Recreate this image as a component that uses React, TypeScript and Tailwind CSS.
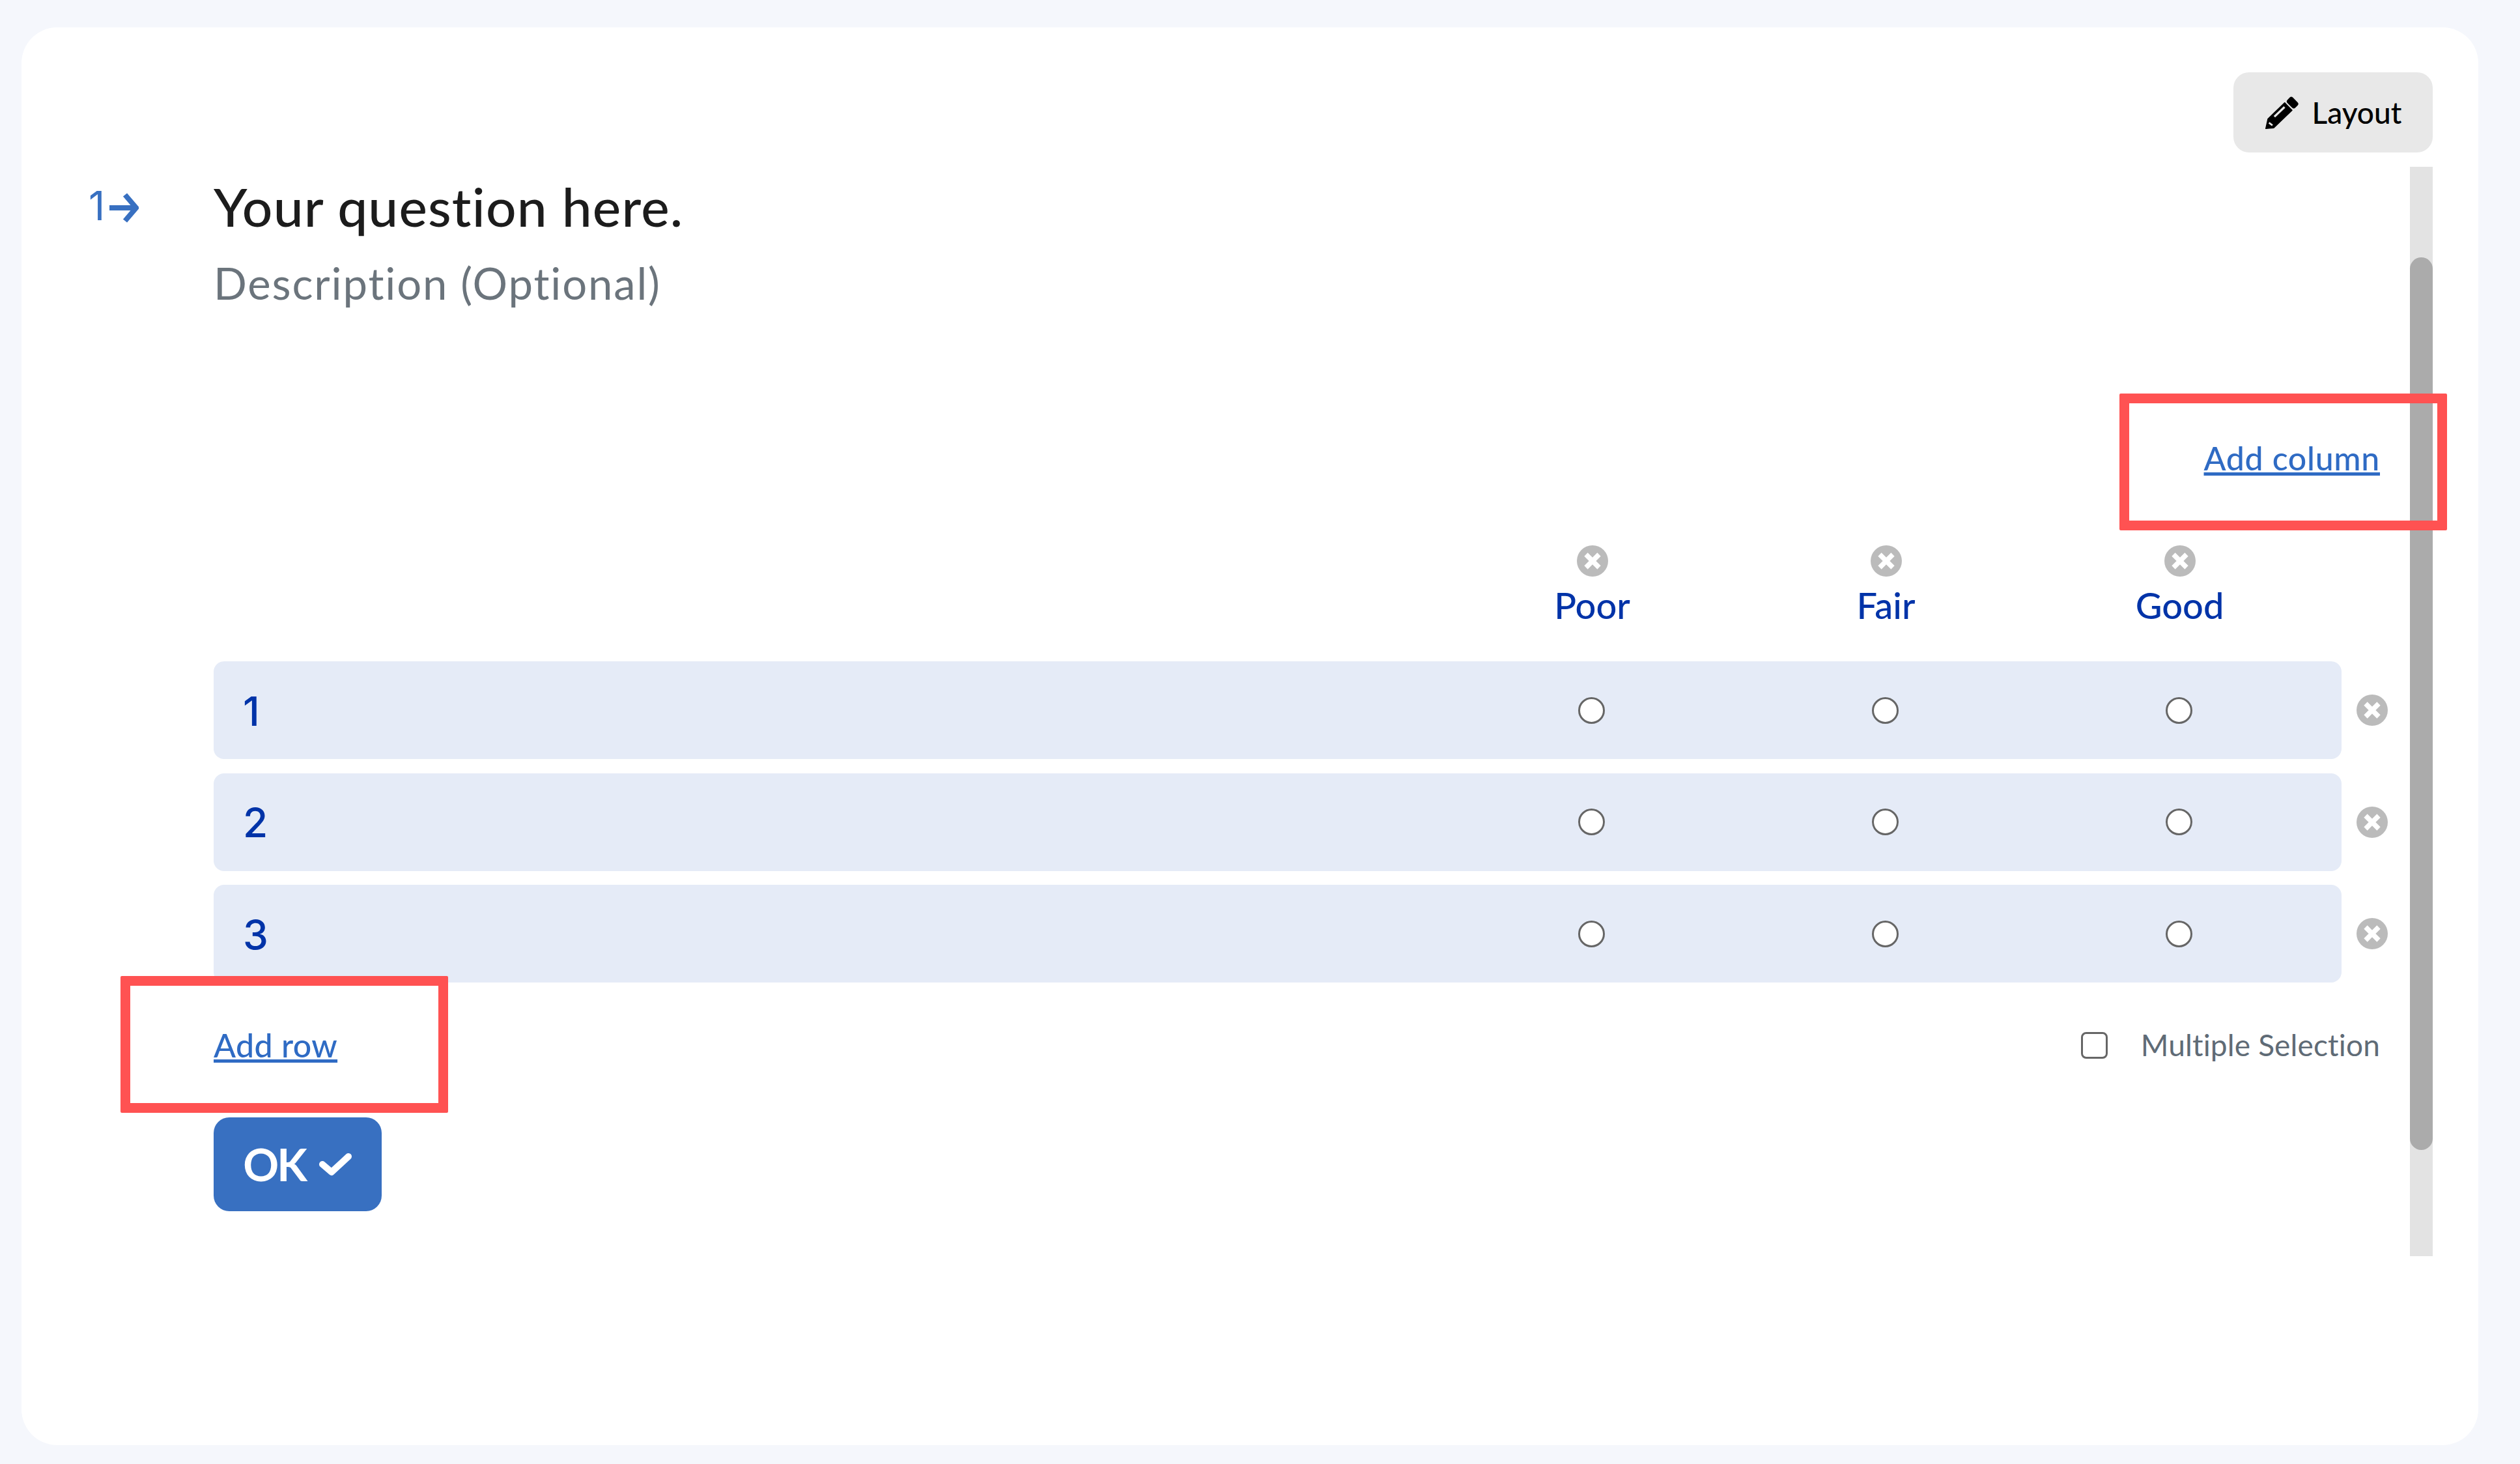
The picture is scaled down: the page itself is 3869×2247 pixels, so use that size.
const columns = ['Poor', 'Fair', 'Good'];
const rows = ['1', '2', '3'];

function RemoveIcon() {
    return (
        <svg viewBox="0 0 50 50" className="w-[50px] h-[50px]">
            <circle cx="25" cy="25" r="24" fill="#bbbbbb" />
            <path d="M15 15L35 35M35 15L15 35" stroke="#ffffff" strokeWidth="7.5" />
        </svg>
    );
}

function PencilIcon() {
    return (
        <svg viewBox="0 0 160 160" className="w-[53px] h-[53px]">
            <path d="M93 35L127 70L42 152L5 155L15 110Z" fill="#000000" strokeLinejoin="round" stroke="#000000" strokeWidth="4" />
            <rect x="103" y="17" width="52" height="36" rx="11" transform="rotate(45 129 35)" fill="#000000" />
            <path d="M45 100L92 55" stroke="#e8e8e8" strokeWidth="10" />
            <path d="M20 128L36 140" stroke="#e8e8e8" strokeWidth="8" />
        </svg>
    );
}

function CheckIcon() {
    return (
        <svg viewBox="0 0 52 38" className="w-[52px] h-[38px]" fill="none" stroke="#ffffff" strokeWidth="10" strokeLinecap="round" strokeLinejoin="round">
            <path d="M6 19L20 31L46 7" />
        </svg>
    );
}

export default function App() {
    return (
        <div className="relative w-[3869px] h-[2247px] bg-[#f5f7fc] pt-[42px] pl-[33px] pr-[64px] pb-[29px] font-['Lato',sans-serif]">
            <div className="h-full bg-white rounded-[55px] pt-[69px] pl-[103px] pr-[70px]">
                <div className="flex justify-end">
                    <button className="w-[306px] h-[123px] rounded-[24px] bg-[#e8e8e8] flex items-center justify-center gap-[20px] text-black text-[46px] font-medium">
                        <PencilIcon />
                        Layout
                    </button>
                </div>

                <div className="flex mt-[22px]">
                    <div className="w-[192px] pt-[23px] flex items-start text-[#3870c1] text-[62px] leading-[74px] font-['Inter',sans-serif] shrink-0">
                        <span>1</span>
                        <svg viewBox="0 0 46 46" className="w-[46px] h-[46px] mt-[17px] ml-[6px]" fill="none" stroke="#3870c1" strokeWidth="8">
                            <path d="M1 23H42M25 3L42 23L25 43" />
                        </svg>
                    </div>

                    <div className="w-[3372px] shrink-0">
                        <div className="pt-[10px] text-[82px] leading-[100px] tracking-[1.2px] font-medium text-[#1c1c1c]">Your question here.</div>
                        <div className="mt-[28px] text-[67px] leading-[80px] tracking-[1.85px] text-[#6b747c]">Description (Optional)</div>

                        <div className="mt-[199px] pr-[46px] flex justify-end">
                            <a className="text-[50px] leading-[60px] tracking-[0.7px] font-medium text-[#2f6bc4] underline">Add column</a>
                        </div>

                        <div className="mt-[103px] mb-[53px] flex pr-[128px] justify-end">
                            {columns.map((col) => (
                                <div key={col} className="w-[451px] flex flex-col items-center gap-[10px]">
                                    <RemoveIcon />
                                    <span className="text-[56px] leading-[66px] font-medium text-[#0033a8]">{col}</span>
                                </div>
                            ))}
                        </div>

                        <div className="flex flex-col gap-[21.5px]">
                            {rows.map((row) => (
                                <div key={row} className="flex items-center">
                                    <div className="w-[3267px] h-[150px] rounded-[16px] bg-[#e5ebf7] flex items-center pl-[45px] pr-[24px]">
                                        <span className="flex-1 pt-[3px] text-[62px] leading-[74px] font-medium font-['Inter',sans-serif] text-[#0033a8]">{row}</span>
                                        {columns.map((col) => (
                                            <div key={col} className="w-[451px] flex justify-center">
                                                <div className="w-[41px] h-[41px] rounded-full bg-white border-[3px] border-[#666666]" />
                                            </div>
                                        ))}
                                    </div>
                                    <div className="ml-[22px]">
                                        <RemoveIcon />
                                    </div>
                                </div>
                            ))}
                        </div>

                        <div className="mt-[66px] pr-[46px] flex items-center justify-between">
                            <a className="text-[50px] leading-[60px] tracking-[0.4px] font-medium text-[#2f6bc4] underline">Add row</a>
                            <div className="flex items-center gap-[51px]">
                                <div className="w-[41px] h-[41px] rounded-[8px] border-[3px] border-[#666666]" />
                                <span className="text-[46px] leading-[60px] tracking-[0.15px] text-[#5f6b76]">Multiple Selection</span>
                            </div>
                        </div>

                        <button className="mt-[81px] w-[258px] h-[144px] rounded-[24px] bg-[#3870c1] flex items-center justify-center gap-[20px] text-white text-[68px] tracking-[-3px] font-bold">
                            OK
                            <CheckIcon />
                        </button>
                    </div>

                    <div className="w-[35px] h-[1672px] bg-[#e3e3e3] shrink-0 pt-[139px]">
                        <div className="h-[1370px] rounded-full bg-[#ababab]" />
                    </div>
                </div>
            </div>

            <div className="absolute left-[3254px] top-[604px] w-[503px] h-[210px] border-[15px] border-[#ff5252] rounded-[2px]" />
            <div className="absolute left-[185px] top-[1498px] w-[503px] h-[210px] border-[15px] border-[#ff5252] rounded-[2px]" />
        </div>
    );
}
